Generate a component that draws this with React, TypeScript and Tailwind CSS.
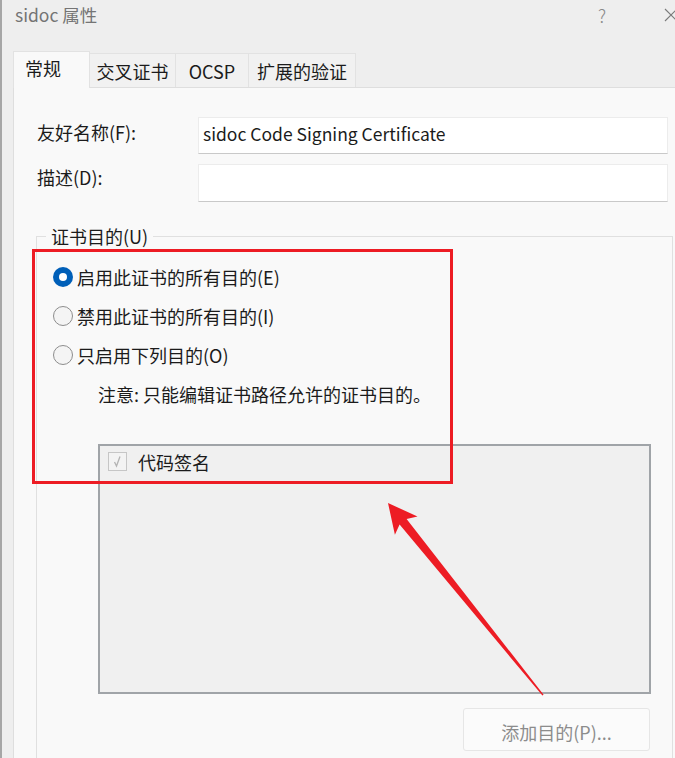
import React from "react";

const font = "font-['Noto_Sans_CJK_SC','Noto_Sans',sans-serif]";

function Radio({ checked, label }: { checked?: boolean; label: string }) {
  return (
    <div className="flex h-[39px] shrink-0 items-center pl-[16px]">
      {checked ? (
        <span className="flex h-[20px] w-[20px] shrink-0 items-center justify-center rounded-full bg-[#005fb8]">
          <span className="h-[8px] w-[8px] rounded-full bg-white" />
        </span>
      ) : (
        <span className="h-[20px] w-[20px] shrink-0 rounded-full border border-[#8d8d8d] bg-[#f4f4f4]" />
      )}
      <span className="ml-[4px] text-[18px] leading-[24px] text-[#1b1b1b]">{label}</span>
    </div>
  );
}

export default function App() {
  return (
    <div className={`relative flex h-[758px] w-[675px] overflow-hidden bg-[#eeeeee] ${font}`}>
      <div className="w-[2px] shrink-0 bg-[#a6a6a6]" />
      <div className="flex min-w-0 flex-1 flex-col">
        {/* title bar */}
        <div className="flex h-[30px] shrink-0 items-center pl-[13px]">
          <span className="text-[17.5px] leading-[24px] text-[#747474]">sidoc 属性</span>
          <span className="ml-auto text-[18px] font-light leading-[24px] text-[#8a8a8a]">?</span>
          <svg className="ml-[58px] mr-[-3px] shrink-0" width="14" height="14" viewBox="0 0 14 14">
            <path d="M1 1 L13 13 M13 1 L1 13" stroke="#7a7a7a" strokeWidth="1.1" fill="none" />
          </svg>
        </div>

        {/* tabs */}
        <div className="mt-[21px] flex shrink-0 items-end pl-[11px]">
          <div className="relative z-10 -mb-px flex h-[37px] w-[77px] items-start border border-b-0 border-[#e2e2e2] bg-[#f9f9f9] pl-[11px] pt-[4px]">
            <span className="text-[18px] leading-[24px] text-[#1b1b1b]">常规</span>
          </div>
          <div className="flex h-[34px] w-[86px] items-center justify-center border-t border-r border-[#e2e2e2] bg-[#f1f1f1]">
            <span className="text-[18px] leading-[24px] text-[#1b1b1b]">交叉证书</span>
          </div>
          <div className="flex h-[34px] w-[73px] items-center justify-center border-t border-r border-[#e2e2e2] bg-[#f1f1f1]">
            <span className="text-[18px] leading-[24px] text-[#1b1b1b]">OCSP</span>
          </div>
          <div className="flex h-[34px] w-[107px] items-center justify-center border-t border-r border-[#e2e2e2] bg-[#f1f1f1]">
            <span className="text-[18px] leading-[24px] text-[#1b1b1b]">扩展的验证</span>
          </div>
        </div>

        {/* panel */}
        <div className="ml-[11px] flex min-h-0 flex-1 flex-col overflow-hidden border-l border-t border-[#dedede] bg-[#f9f9f9] pt-[29px]">
          <div className="flex shrink-0 items-start">
            <span className="w-[184px] shrink-0 pl-[23px] pt-[3px] text-[18px] leading-[24px] text-[#1b1b1b]">友好名称(F):</span>
            <div className="flex h-[37px] w-[470px] items-center border border-[#ececec] border-b-[#c9c9c9] bg-white pb-[3px] pl-[4px]">
              <span className="text-[17.5px] leading-[24px] text-[#1b1b1b]">sidoc Code Signing Certificate</span>
            </div>
          </div>
          <div className="mt-[10px] flex shrink-0 items-start">
            <span className="w-[184px] shrink-0 pl-[23px] pt-[1px] text-[18px] leading-[24px] text-[#1b1b1b]">描述(D):</span>
            <div className="h-[38px] w-[470px] border border-[#ececec] border-b-[#c9c9c9] bg-white" />
          </div>

          {/* group box */}
          <div className="relative ml-[22px] mt-[34px] h-[600px] w-[637px] shrink-0 border border-[#e0e0e0] pt-[20px]">
            <span className="absolute left-[9px] top-[-13px] bg-[#f9f9f9] px-[5px] text-[18px] leading-[24px] text-[#1b1b1b]">
              证书目的(U)
            </span>
            <Radio checked label="启用此证书的所有目的(E)" />
            <Radio label="禁用此证书的所有目的(I)" />
            <Radio label="只启用下列目的(O)" />
            <div className="mt-[8px] pl-[61px] text-[18px] leading-[24px] text-[#1b1b1b]">
              注意: 只能编辑证书路径允许的证书目的。
            </div>
            <div className="ml-[61px] mt-[38px] h-[250px] w-[553px] border-2 border-[#a0a4a8] bg-[#f0f0f0]">
              <div className="flex h-[30px] items-center pl-[8px] pt-[1px]">
                <span className="flex h-[19px] w-[19px] items-center justify-center border border-[#c6c6c6] bg-[#f3f3f3]">
                  <svg width="13" height="13" viewBox="0 0 13 13">
                    <path d="M3.5 7 L5.5 11 L9 1.5" stroke="#b3b3b3" strokeWidth="1.3" fill="none" />
                  </svg>
                </span>
                <span className="ml-[11px] text-[18px] leading-[24px] text-[#1b1b1b]">代码签名</span>
              </div>
            </div>
            <div className="ml-[426px] mt-[14px] flex h-[43px] w-[187px] items-center justify-center rounded-[3px] border border-[#e6e6e6] bg-[#fbfbfb] pt-[4px]">
              <span className="text-[18px] leading-[24px] text-[#8c8c8c]">添加目的(P)...</span>
            </div>
          </div>
        </div>
      </div>

      {/* annotation overlay */}
      <svg className="pointer-events-none absolute left-0 top-0" width="675" height="758" viewBox="0 0 675 758">
        <rect x="33.5" y="250.5" width="418" height="232" fill="none" stroke="#ed1c24" strokeWidth="3" />
        <polygon
          points="388,503 417.5,516.5 406.6,518.9 543.6,694.8 542.4,695.6 399.6,524.5 394.9,534.7"
          fill="#ed1c24"
        />
      </svg>
    </div>
  );
}
